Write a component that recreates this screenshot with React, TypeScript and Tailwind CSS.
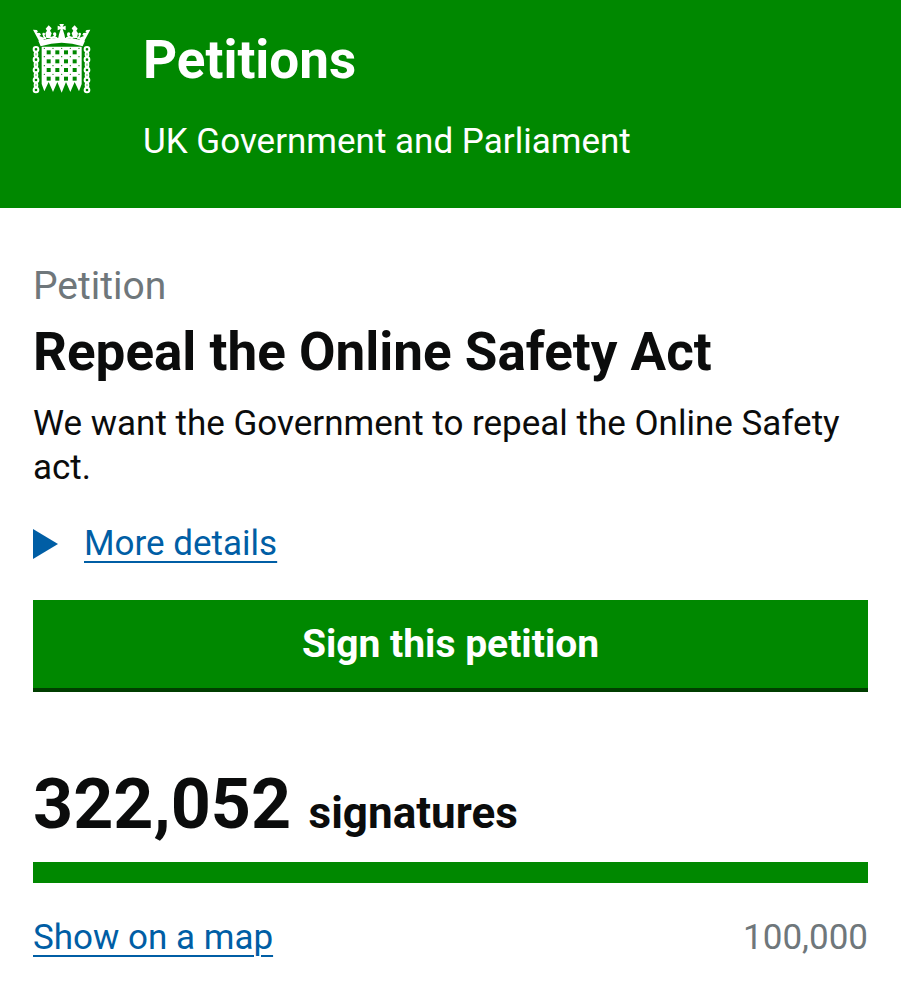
const columns = [86, 112, 138, 164];
const rows = [115, 142, 168, 194];
const rivetColumns = [73, 99, 125, 151, 177];
const rivetRows = [103, 128, 155, 181];
const rings = [106, 137, 168, 198, 228];
const links = [121, 152, 183, 213];

function CrownSide() {
  return (
    <g>
      <path d="M39 47 50 48 54 52 50 56 60 57 63 62 58 66 68 70 72 80 62 90Z" fill="white" stroke="none" />
      <path d="M86 34 95 43 90 50 95 58 90 72H79L76 58 81 50 77 44Z" fill="white" stroke="none" />
      <path d="M62 82Q66 70 78 73Q68 66 72 60M90 70Q102 74 107 61M92 74Q106 66 114 76" strokeWidth="5" />
      <circle cx="71" cy="60" r="4" fill="white" stroke="none" />
      <circle cx="104" cy="60" r="5" fill="white" stroke="none" />
    </g>
  );
}

function Crest() {
  return (
    <svg viewBox="36 30 180 216" className="h-[72px] w-[60px] shrink-0" fill="none" stroke="white" aria-hidden="true">
      <CrownSide />
      <g transform="translate(250 0) scale(-1 1)">
        <CrownSide />
      </g>
      <g fill="white" stroke="none">
        <path d="M65 98H185V210L177 232 164 204 151 234 138 204 125 236 112 204 99 234 86 204 73 232 65 210Z" />
        <path d="M62 97 55 80Q125 62 195 80L188 97Q125 76 62 97Z" />
        <path d="M118 30h14l-4 8 9-3v14l-9-4 5 16 3 14h-22l3-14 5-16-9 4V35l9 3Z" />
      </g>
      <g fill="#008800" stroke="none">
        {rows.map((y) => columns.map((x) => <rect key={`${x}-${y}`} x={x - 6} y={y - 6} width="12" height="12" />))}
        {rivetRows.map((y) => rivetColumns.map((x) => <circle key={`${x}-${y}`} cx={x} cy={y} r="2" />))}
      </g>
      {[48, 201].map((x) => (
        <g key={x}>
          {rings.map((y) => <circle key={y} cx={x} cy={y} r="7" strokeWidth="6" />)}
          {links.map((y) => <ellipse key={y} cx={x} cy={y} rx="4" ry="7" strokeWidth="6" />)}
        </g>
      ))}
    </svg>
  );
}

export default function App() {
  return (
    <div className="min-h-screen bg-white font-[Roboto,sans-serif] text-[#0b0c0c]">
      <header className="flex gap-[51px] bg-[#008800] px-8 pt-6 pb-11 text-white">
        <Crest />
        <div>
          <a href="#home" className="block text-[53px] leading-[72px] font-bold">Petitions</a>
          <p className="mt-6 text-[35px] leading-[44px]">UK Government and Parliament</p>
        </div>
      </header>
      <main className="px-[33px] pt-[54px] pb-10">
        <h1>
          <span className="block text-[39px] leading-[48px] text-[#6f777b]">Petition</span>
          <span className="mt-3 block text-[53px] leading-[60px] font-bold">Repeal the Online Safety Act</span>
        </h1>
        <p className="mt-5 text-[35px] leading-[44px]">We want the Government to repeal the Online Safety act.</p>
        <details className="mt-8">
          <summary className="flex cursor-pointer list-none items-center gap-[26px] text-[35px] leading-[44px] text-[#005ea5]">
            <svg viewBox="0 0 25 30" className="h-[30px] w-[25px]" fill="currentColor" aria-hidden="true">
              <path d="M0 0 25 15 0 30Z" />
            </svg>
            <span className="underline decoration-2 underline-offset-[6px]">More details</span>
          </summary>
        </details>
        <button type="button" className="mt-[34px] block h-[92px] w-full border-b-4 border-[#003e00] bg-[#008800] text-[39px] font-bold text-white">
          Sign this petition
        </button>
        <p className="mt-[72px] text-[70px] leading-[80px] font-bold">
          322,052 <span className="text-[44px] leading-none">signatures</span>
        </p>
        <div className="mt-[18px] h-[21px] bg-[#008800]" />
        <div className="mt-[33px] flex justify-between text-[35px] leading-[44px]">
          <a href="#map" className="text-[#005ea5] underline decoration-2 underline-offset-[6px]">Show on a map</a>
          <span className="text-[#6f777b]">100,000</span>
        </div>
      </main>
    </div>
  );
}
